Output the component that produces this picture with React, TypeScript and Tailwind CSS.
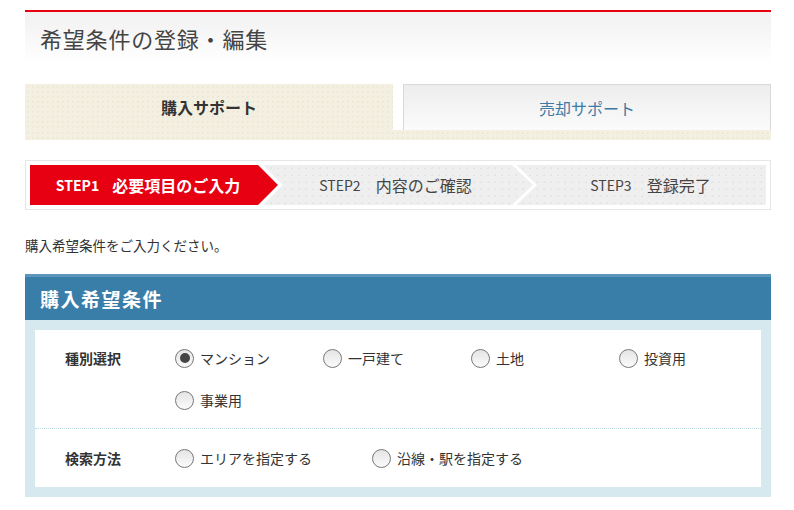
import React from "react";

const FONT = "font-['Noto_Sans_CJK_JP','Noto_Sans',sans-serif]";

const TYPES = [
  { id: "mansion", label: "マンション", checked: true },
  { id: "house", label: "一戸建て" },
  { id: "land", label: "土地" },
  { id: "invest", label: "投資用" },
  { id: "biz", label: "事業用" },
];

const METHODS = [
  { id: "area", label: "エリアを指定する" },
  { id: "line", label: "沿線・駅を指定する" },
];

function Radio({ label, checked }: { label: string; checked?: boolean }) {
  return (
    <label className="flex items-center h-[20px] gap-[6px] text-[14px] text-[#333] cursor-pointer">
      <span className="w-[19px] h-[19px] rounded-full border border-[#777] bg-gradient-to-b from-[#e4e4e4] to-[#fbfbfb] flex items-center justify-center shrink-0">
        {checked && <span className="w-[10px] h-[10px] rounded-full bg-[#444]" />}
      </span>
      <span className="leading-none whitespace-nowrap">{label}</span>
    </label>
  );
}

export default function App() {
  return (
    <div className={`${FONT} bg-white min-h-[510px] pt-[10px]`}>
      <div className="ml-[25px] w-[746px]">
        {/* Heading */}
        <div className="border-t-2 border-[#e60012] h-[54px] bg-gradient-to-b from-[#f1f1f1] to-white flex items-center px-[15px]">
          <h1 className="text-[22px] text-[#444] tracking-[0.8px]">希望条件の登録・編集</h1>
        </div>

        {/* Tabs */}
        <div className="mt-[20px]">
          <div className="flex items-end gap-[10px]">
            <div className="w-[368px] h-[46px] bg-[#f4f0e1] bg-[radial-gradient(#ede8d6_1px,transparent_1px)] bg-[length:5px_5px] flex items-center justify-center">
              <span className="text-[16px] font-bold text-[#333]">購入サポート</span>
            </div>
            <div className="w-[368px] h-[46px] border border-b-0 border-[#d9d9d9] bg-gradient-to-b from-[#ededed] to-[#fbfbfb] flex items-center justify-center">
              <span className="text-[16px] text-[#3c7aa5]">売却サポート</span>
            </div>
          </div>
          <div className="h-[10px] bg-[#f4f0e1] bg-[radial-gradient(#ede8d6_1px,transparent_1px)] bg-[length:5px_5px]" />
        </div>

        {/* Steps */}
        <div className="mt-[20px] border border-[#e6e6e6] p-[4px]">
          <div className="relative flex h-[40px] bg-[#efefef] bg-[radial-gradient(#e3e3e3_1px,transparent_1px)] bg-[length:7px_7px]">
            <div className="w-[248px] h-full bg-[#e60012] [clip-path:polygon(0_0,228px_0,248px_50%,228px_100%,0_100%)] flex items-center justify-center pr-[12px] font-bold text-white whitespace-nowrap">
              <span className="text-[14px]">STEP1</span>
              <span className="text-[16px] ml-[13px]">必要項目のご入力</span>
            </div>
            <div className="w-[257px] h-full flex items-center justify-center pr-[22px] text-[#444] whitespace-nowrap">
              <span className="text-[14px]">STEP2</span>
              <span className="text-[16px] ml-[15px]">内容のご確認</span>
            </div>
            <div className="flex-1 h-full flex items-center justify-center text-[#444] whitespace-nowrap">
              <span className="text-[14px]">STEP3</span>
              <span className="text-[16px] ml-[15px]">登録完了</span>
            </div>
            <svg className="absolute inset-0 pointer-events-none" width="736" height="40" viewBox="0 0 736 40">
              <polyline points="230,-1 250.5,20 230,41" fill="none" stroke="#fff" strokeWidth="3" />
              <polyline points="483,-1 505,20 483,41" fill="none" stroke="#fff" strokeWidth="3" />
            </svg>
          </div>
        </div>

        <p className="mt-[25px] text-[13.5px] text-[#333]">購入希望条件をご入力ください。</p>

        {/* Panel */}
        <div className="mt-[19px]">
          <div className="border-t-[3px] border-[#5b96bb] bg-[#397ea8] h-[46px] flex items-center px-[15px]">
            <h2 className="text-[19px] font-bold text-white tracking-[1.5px]">購入希望条件</h2>
          </div>
          <div className="bg-[#d5e9ef] p-[10px]">
            <div className="bg-white">
              <div className="flex pl-[30px] pt-[18px] pb-[18px] border-b border-dotted border-[#bcdbe4]">
                <div className="w-[110px] shrink-0 h-[20px] flex items-center text-[14px] font-bold text-[#333]">種別選択</div>
                <div className="grid grid-cols-[148px_148px_148px_auto] gap-y-[22px]">
                  {TYPES.map((t) => (
                    <Radio key={t.id} label={t.label} checked={t.checked} />
                  ))}
                </div>
              </div>
              <div className="flex pl-[30px] pt-[19px] pb-[19px]">
                <div className="w-[110px] shrink-0 h-[20px] flex items-center text-[14px] font-bold text-[#333]">検索方法</div>
                <div className="grid grid-cols-[197px_auto]">
                  {METHODS.map((m) => (
                    <Radio key={m.id} label={m.label} />
                  ))}
                </div>
              </div>
            </div>
          </div>
        </div>
      </div>
    </div>
  );
}
